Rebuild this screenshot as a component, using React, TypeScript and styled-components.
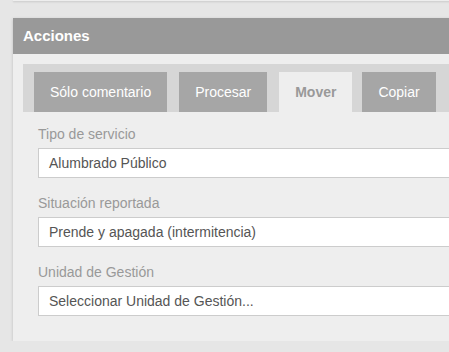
import React from "react";
import styled, { createGlobalStyle } from "styled-components";

const GlobalStyle = createGlobalStyle`
  html, body {
    margin: 0;
    padding: 0;
    overflow: hidden;
    background: #e6e6e6;
    font-family: "Liberation Sans", Arial, sans-serif;
  }
`;

const Page = styled.div`
  width: 540px;
  padding: 0 0 0 13px;
`;

const PrevCard = styled.div`
  height: 1px;
  background: #eeeeee;
  box-shadow: 0 1px 2px rgba(0, 0, 0, 0.18);
`;

const Card = styled.section`
  margin-top: 17px;
  background: #eeeeee;
  box-shadow: 0 1px 3px rgba(0, 0, 0, 0.18);
`;

const Header = styled.h3`
  margin: 0;
  height: 36px;
  line-height: 36px;
  padding: 0 10px;
  background: #999999;
  color: #ffffff;
  font-size: 15px;
  font-weight: bold;
`;

const Body = styled.div`
  padding: 10px 0 25px 10px;
`;

const TabBar = styled.div`
  display: flex;
  gap: 12px;
  align-items: flex-end;
  height: 48px;
  padding: 0 0 0 11px;
  background: #d6d6d6;
`;

const Tab = styled.button<{ $active?: boolean }>`
  height: 40px;
  padding: 0 16px;
  margin-right: ${(p) => (p.$active ? -2 : 0)}px;
  border: none;
  background: ${(p) => (p.$active ? "#eeeeee" : "#a6a6a6")};
  color: ${(p) => (p.$active ? "#999999" : "#ffffff")};
  font-family: inherit;
  font-size: 14px;
  font-weight: ${(p) => (p.$active ? "bold" : "normal")};
`;

const Form = styled.div`
  display: flex;
  flex-direction: column;
  gap: 15px;
  padding: 12px 0 0 15px;
`;

const Field = styled.div`
  display: flex;
  flex-direction: column;
  gap: 4px;
`;

const Label = styled.label`
  color: #999999;
  font-size: 14px;
  line-height: 20px;
`;

const Select = styled.div`
  box-sizing: border-box;
  height: 30px;
  line-height: 28px;
  padding: 0 10px;
  border: 1px solid #cccccc;
  background: #ffffff;
  color: #555555;
  font-size: 14px;
`;

const tabs = ["Sólo comentario", "Procesar", "Mover", "Copiar"];

const fields = [
  { label: "Tipo de servicio", value: "Alumbrado Público" },
  { label: "Situación reportada", value: "Prende y apagada (intermitencia)" },
  { label: "Unidad de Gestión", value: "Seleccionar Unidad de Gestión..." },
];

export default function App() {
  return (
    <>
      <GlobalStyle />
      <Page>
        <PrevCard />
        <Card>
          <Header>Acciones</Header>
          <Body>
            <TabBar>
              {tabs.map((t) => (
                <Tab key={t} $active={t === "Mover"}>
                  {t}
                </Tab>
              ))}
            </TabBar>
            <Form>
              {fields.map((f) => (
                <Field key={f.label}>
                  <Label>{f.label}</Label>
                  <Select>{f.value}</Select>
                </Field>
              ))}
            </Form>
          </Body>
        </Card>
      </Page>
    </>
  );
}
